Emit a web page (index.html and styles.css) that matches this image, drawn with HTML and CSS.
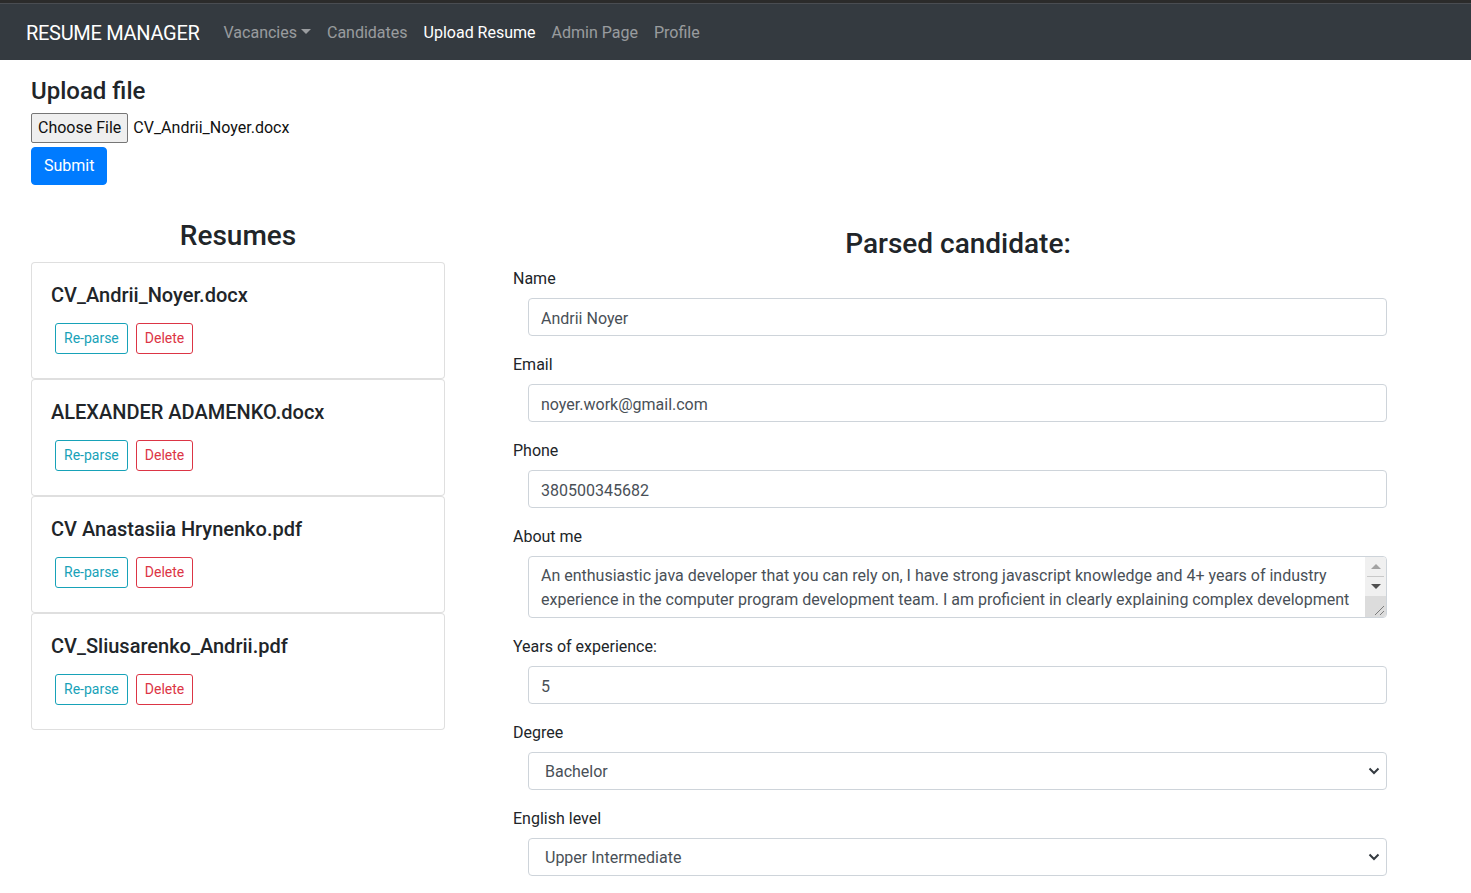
FILE: index.html
```html
<!DOCTYPE html>
<html lang="en">
<head>
<meta charset="utf-8">
<title>Resume Manager - Upload Resume</title>
<link rel="stylesheet" href="styles.css">
</head>
<body>
<nav class="navbar">
  <a class="brand" href="#">RESUME MANAGER</a>
  <ul class="nav">
    <li><a class="nav-link dropdown-toggle" href="#">Vacancies</a></li>
    <li><a class="nav-link" href="#">Candidates</a></li>
    <li><a class="nav-link active" href="#">Upload Resume</a></li>
    <li><a class="nav-link" href="#">Admin Page</a></li>
    <li><a class="nav-link" href="#">Profile</a></li>
  </ul>
</nav>
<main class="page">
  <section class="upload">
    <h4 class="upload-title">Upload file</h4>
    <div class="file-row">
      <span class="file-btn">Choose File</span>
      <span class="file-name">CV_Andrii_Noyer.docx</span>
    </div>
    <button class="btn btn-primary" type="button">Submit</button>
  </section>
  <div class="columns">
    <section class="col-left">
      <h3 class="col-title">Resumes</h3>
      <div class="card">
        <h5 class="card-title">CV_Andrii_Noyer.docx</h5>
        <div class="card-actions">
          <button class="btn btn-sm btn-outline-info" type="button">Re-parse</button>
          <button class="btn btn-sm btn-outline-danger" type="button">Delete</button>
        </div>
      </div>
      <div class="card">
        <h5 class="card-title">ALEXANDER ADAMENKO.docx</h5>
        <div class="card-actions">
          <button class="btn btn-sm btn-outline-info" type="button">Re-parse</button>
          <button class="btn btn-sm btn-outline-danger" type="button">Delete</button>
        </div>
      </div>
      <div class="card">
        <h5 class="card-title">CV Anastasiia Hrynenko.pdf</h5>
        <div class="card-actions">
          <button class="btn btn-sm btn-outline-info" type="button">Re-parse</button>
          <button class="btn btn-sm btn-outline-danger" type="button">Delete</button>
        </div>
      </div>
      <div class="card">
        <h5 class="card-title">CV_Sliusarenko_Andrii.pdf</h5>
        <div class="card-actions">
          <button class="btn btn-sm btn-outline-info" type="button">Re-parse</button>
          <button class="btn btn-sm btn-outline-danger" type="button">Delete</button>
        </div>
      </div>
    </section>
    <section class="col-right">
      <h3 class="col-title parsed-title">Parsed candidate:</h3>
      <form class="candidate-form">
        <div class="form-group">
          <label for="name">Name</label>
          <input class="form-control" id="name" type="text" value="Andrii Noyer">
        </div>
        <div class="form-group">
          <label for="email">Email</label>
          <input class="form-control" id="email" type="text" value="noyer.work@gmail.com">
        </div>
        <div class="form-group">
          <label for="phone">Phone</label>
          <input class="form-control" id="phone" type="text" value="380500345682">
        </div>
        <div class="form-group">
          <label for="about">About me</label>
          <div class="textarea-wrap">
            <textarea class="form-control textarea" id="about" rows="2">An enthusiastic java developer that you can rely on, I have strong javascript knowledge and 4+ years of industry experience in the computer program development team. I am proficient in clearly explaining complex development</textarea>
            <div class="fake-scrollbar" aria-hidden="true">
              <span class="sb-btn sb-up"><span class="tri tri-up"></span></span>
              <span class="sb-btn sb-down"><span class="tri tri-down"></span></span>
              <span class="sb-corner">
                <svg width="21" height="21" viewBox="0 0 21 21"><path d="M19 10L10 19M19 15L15 19" stroke="#7c7c7c" stroke-width="1" fill="none"/></svg>
              </span>
            </div>
          </div>
        </div>
        <div class="form-group">
          <label for="years">Years of experience:</label>
          <input class="form-control" id="years" type="text" value="5">
        </div>
        <div class="form-group">
          <label for="degree">Degree</label>
          <select class="form-control select" id="degree">
            <option>Bachelor</option>
            <option>Master</option>
          </select>
        </div>
        <div class="form-group">
          <label for="english">English level</label>
          <select class="form-control select" id="english">
            <option>Upper Intermediate</option>
            <option>Advanced</option>
          </select>
        </div>
      </form>
    </section>
  </div>
</main>
</body>
</html>
```

FILE: styles.css
```css
* { box-sizing: border-box; }
html, body { margin: 0; padding: 0; }
body {
  font-family: Roboto, "Noto Sans", sans-serif;
  font-size: 16px;
  line-height: 1.5;
  color: #212529;
  background: #fff;
}
a { text-decoration: none; }

.navbar {
  display: flex;
  align-items: center;
  height: 60px;
  padding: 3px 16px 0 26px;
  background: #343a40;
  border-top: 3px solid #2b2b2b;
  box-shadow: inset 0 1px 0 #4a4d52;
}
.brand {
  color: #fff;
  font-size: 20px;
  line-height: 30px;
  letter-spacing: -0.3px;
  margin-right: 16px;
}
.nav {
  display: flex;
  list-style: none;
  margin: 0;
  padding: 0;
}
.nav-link {
  display: block;
  padding: 8px 8px;
  color: rgba(255,255,255,.5);
}
.nav-link.active { color: #fff; }
.dropdown-toggle::after {
  content: "";
  display: inline-block;
  margin-left: 4px;
  vertical-align: 4px;
  border-top: 5px solid;
  border-right: 5px solid transparent;
  border-left: 5px solid transparent;
}

.page {
  padding: 17px 0 0 31px;
}
.upload-title {
  margin: 0 0 7px;
  font-size: 24px;
  font-weight: 500;
  line-height: 1.2;
}
.file-row {
  display: flex;
  align-items: center;
  height: 30px;
  margin-bottom: 4px;
}
.file-btn {
  display: inline-flex;
  align-items: center;
  height: 30px;
  padding: 0 6px;
  background: #efefef;
  border: 1px solid #767676;
  border-radius: 2px;
  color: #111;
  margin-right: 5px;
}
.file-name { color: #111; }

.btn {
  display: inline-block;
  font-family: inherit;
  font-size: 16px;
  line-height: 1.5;
  padding: 6px 12px;
  border: 1px solid transparent;
  border-radius: 4px;
  background: transparent;
  cursor: pointer;
}
.btn-primary {
  color: #fff;
  background: #007bff;
  border-color: #007bff;
}
.btn-sm {
  font-size: 14px;
  padding: 4px 8px;
  border-radius: 3px;
}
.btn-outline-info { color: #17a2b8; border-color: #17a2b8; }
.btn-outline-danger { color: #dc3545; border-color: #dc3545; }

.columns {
  display: flex;
  align-items: flex-start;
  gap: 68px;
  margin-top: 34px;
}
.col-left { width: 414px; flex: none; }
.col-right { width: 890px; flex: none; }
.col-title {
  margin: 0 0 10px;
  text-align: center;
  font-size: 28px;
  font-weight: 500;
  line-height: 1.2;
}
.parsed-title { margin: 8px 0 6px; }

.card {
  border: 1px solid rgba(0,0,0,.125);
  border-radius: 4px;
  padding: 20px 19px;
  background: #fff;
}
.card-title {
  margin: 0 0 12px;
  padding-top: 1px;
  font-size: 20px;
  font-weight: 500;
  line-height: 23px;
}
.card-actions { display: flex; }
.card-actions .btn { margin: 4px; }

.form-group { margin-bottom: 16px; }
.form-group label {
  display: block;
  margin-bottom: 8px;
  padding-top: 1px;
  line-height: 23px;
}
.form-control {
  display: block;
  width: 859px;
  margin-left: 15px;
  height: 38px;
  padding: 7px 12px 5px;
  font-family: inherit;
  font-size: 16px;
  line-height: 1.5;
  color: #495057;
  background: #fff;
  border: 1px solid #ced4da;
  border-radius: 4px;
}
.textarea-wrap {
  position: relative;
  width: 859px;
  margin-left: 15px;
}
.textarea {
  margin-left: 0;
  height: 62px;
  resize: none;
  overflow: hidden;
  padding-right: 33px;
}
.fake-scrollbar {
  position: absolute;
  top: 1px;
  right: 1px;
  bottom: 1px;
  width: 21px;
  display: flex;
  flex-direction: column;
  background: #f0f0f0;
  border-radius: 0 3px 3px 0;
  overflow: hidden;
}
.sb-btn {
  display: flex;
  align-items: center;
  justify-content: center;
  height: 20px;
  flex: none;
}
.sb-up {
  height: 20px;
  border-bottom: 1px solid #c9c9c9;
  margin: 0 2px;
}
.sb-down { height: 19px; }
.tri {
  width: 0;
  height: 0;
  border-left: 5px solid transparent;
  border-right: 5px solid transparent;
}
.tri-up { border-bottom: 5px solid #a3a3a3; }
.tri-down { border-top: 5px solid #505050; }
.sb-corner {
  flex: 1;
  background: #dcdcdc;
  display: flex;
  align-items: flex-end;
  justify-content: flex-end;
}
.sb-corner svg { display: block; }
.select {
  -webkit-appearance: none;
  appearance: none;
  padding-left: 16px;
  background: #fff url("data:image/svg+xml,%3Csvg xmlns='http://www.w3.org/2000/svg' width='12' height='8'%3E%3Cpath d='M1.5 1.5L6 6l4.5-4.5' fill='none' stroke='%23343a40' stroke-width='2'/%3E%3C/svg%3E") no-repeat right 6px center;
}
```
